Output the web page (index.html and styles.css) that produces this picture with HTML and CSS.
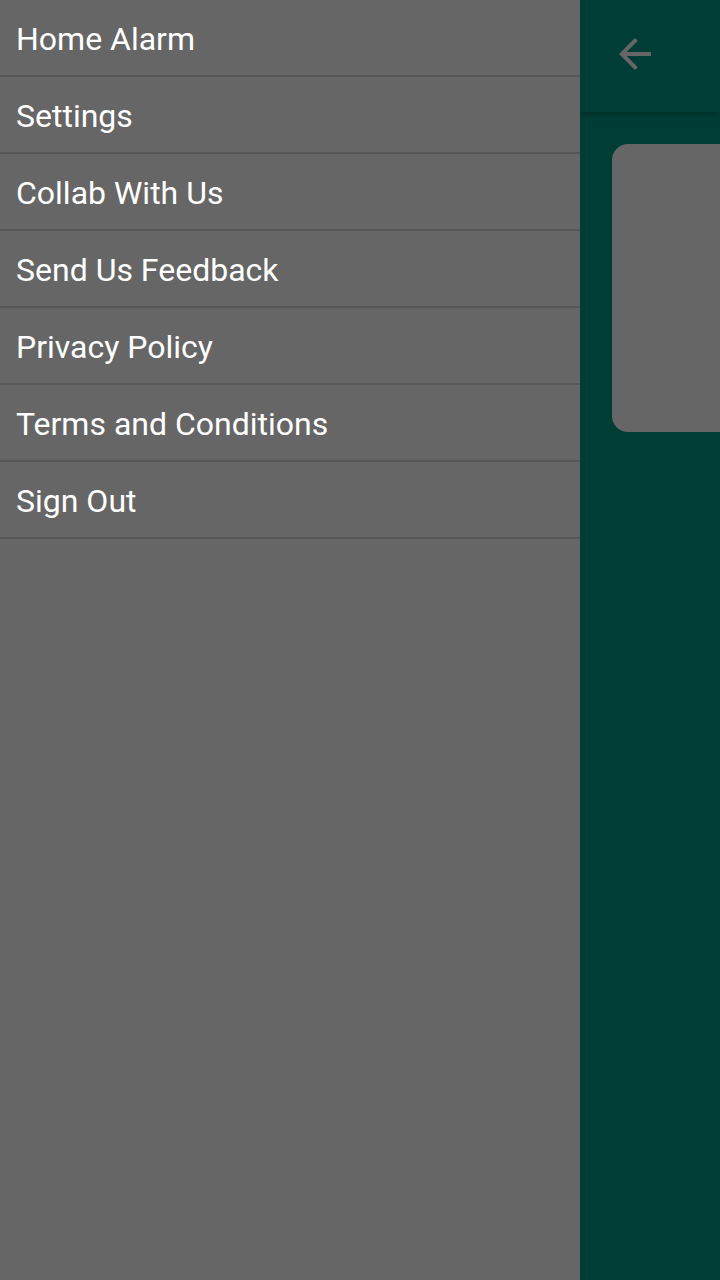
FILE: index.html
```html
<!DOCTYPE html>
<html>
<head>
<meta charset="utf-8">
<link rel="stylesheet" href="styles.css">
</head>
<body>
<div class="screen">
  <nav class="drawer">
    <div class="item">Home Alarm</div>
    <div class="item">Settings</div>
    <div class="item">Collab With Us</div>
    <div class="item">Send Us Feedback</div>
    <div class="item">Privacy Policy</div>
    <div class="item">Terms and Conditions</div>
    <div class="item">Sign Out</div>
  </nav>
  <main class="content">
    <header class="toolbar">
      <svg class="back" viewBox="0 0 24 24" width="48" height="48"><path d="M20 11H7.83l5.59-5.59L12 4l-8 8 8 8 1.41-1.41L7.83 13H20v-2z" fill="#666666"/></svg>
    </header>
    <div class="body">
      <div class="card"></div>
    </div>
  </main>
</div>
</body>
</html>
```
FILE: styles.css
```css
html, body {
  margin: 0;
  padding: 0;
}
body {
  width: 720px;
  height: 1280px;
  overflow: hidden;
  font-family: Roboto, "Noto Sans", sans-serif;
}
.screen {
  display: flex;
  width: 720px;
  height: 1280px;
}
.drawer {
  width: 580px;
  flex: none;
  background: #666666;
  display: flex;
  flex-direction: column;
}
.item {
  height: 75px;
  border-bottom: 2px solid #575757;
  display: flex;
  align-items: center;
  padding-left: 16px;
  padding-top: 2px;
  box-sizing: border-box;
  height: 77px;
  color: #ffffff;
  font-size: 32px;
}
.content {
  flex: 1;
  background: #003d36;
  display: flex;
  flex-direction: column;
  overflow: hidden;
}
.toolbar {
  height: 112px;
  flex: none;
  display: flex;
  align-items: center;
  padding-left: 31px;
  box-shadow: 0 3px 6px rgba(0, 0, 0, 0.25);
  position: relative;
}
.back {
  display: block;
  margin-top: -4px;
}
.body {
  padding: 32px 0 0 32px;
}
.card {
  width: 140px;
  height: 288px;
  background: #666666;
  border-radius: 16px 0 0 16px;
}
```
